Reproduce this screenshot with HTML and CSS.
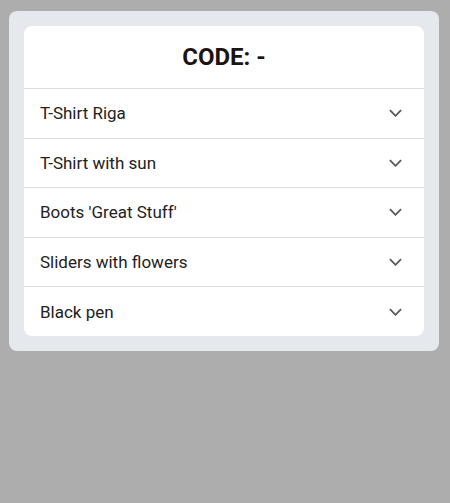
FILE: index.html
```html
<!DOCTYPE html>
<html>
<head>
<meta charset="utf-8">
<link rel="stylesheet" href="styles.css">
</head>
<body>
<div class="outer">
  <div class="card">
    <div class="header">CODE: -</div>
    <div class="row"><span>T-Shirt Riga</span><svg class="chev" viewBox="0 0 14 8"><path d="M1 1 L7 7 L13 1"/></svg></div>
    <div class="row"><span>T-Shirt with sun</span><svg class="chev" viewBox="0 0 14 8"><path d="M1 1 L7 7 L13 1"/></svg></div>
    <div class="row"><span>Boots 'Great Stuff'</span><svg class="chev" viewBox="0 0 14 8"><path d="M1 1 L7 7 L13 1"/></svg></div>
    <div class="row"><span>Sliders with flowers</span><svg class="chev" viewBox="0 0 14 8"><path d="M1 1 L7 7 L13 1"/></svg></div>
    <div class="row"><span>Black pen</span><svg class="chev" viewBox="0 0 14 8"><path d="M1 1 L7 7 L13 1"/></svg></div>
  </div>
</div>
</body>
</html>
```
FILE: styles.css
```css
html, body {
  margin: 0;
  padding: 0;
  background: #adadad;
  font-family: Roboto, "Liberation Sans", sans-serif;
}
body {
  padding: 11px 0 0 9px;
}
.outer {
  width: 400px;
  padding: 15px;
  background: #e5e8ec;
  border-radius: 8px;
}
.card {
  background: #fff;
  border-radius: 8px;
  overflow: hidden;
}
.header {
  height: 62px;
  display: flex;
  align-items: center;
  justify-content: center;
  font-size: 24px;
  font-weight: 700;
  color: #1c1414;
  padding-bottom: 1px;
  box-sizing: border-box;
}
.row {
  border-top: 1px solid #dcdcdc;
  height: 48.6px;
  display: flex;
  align-items: center;
  justify-content: space-between;
  padding: 0 22px 0 16px;
  font-size: 17px;
  color: #222;
}
.chev {
  width: 13px;
  height: 8px;
  fill: none;
  stroke: #5a5a5a;
  stroke-width: 2;
}
```
